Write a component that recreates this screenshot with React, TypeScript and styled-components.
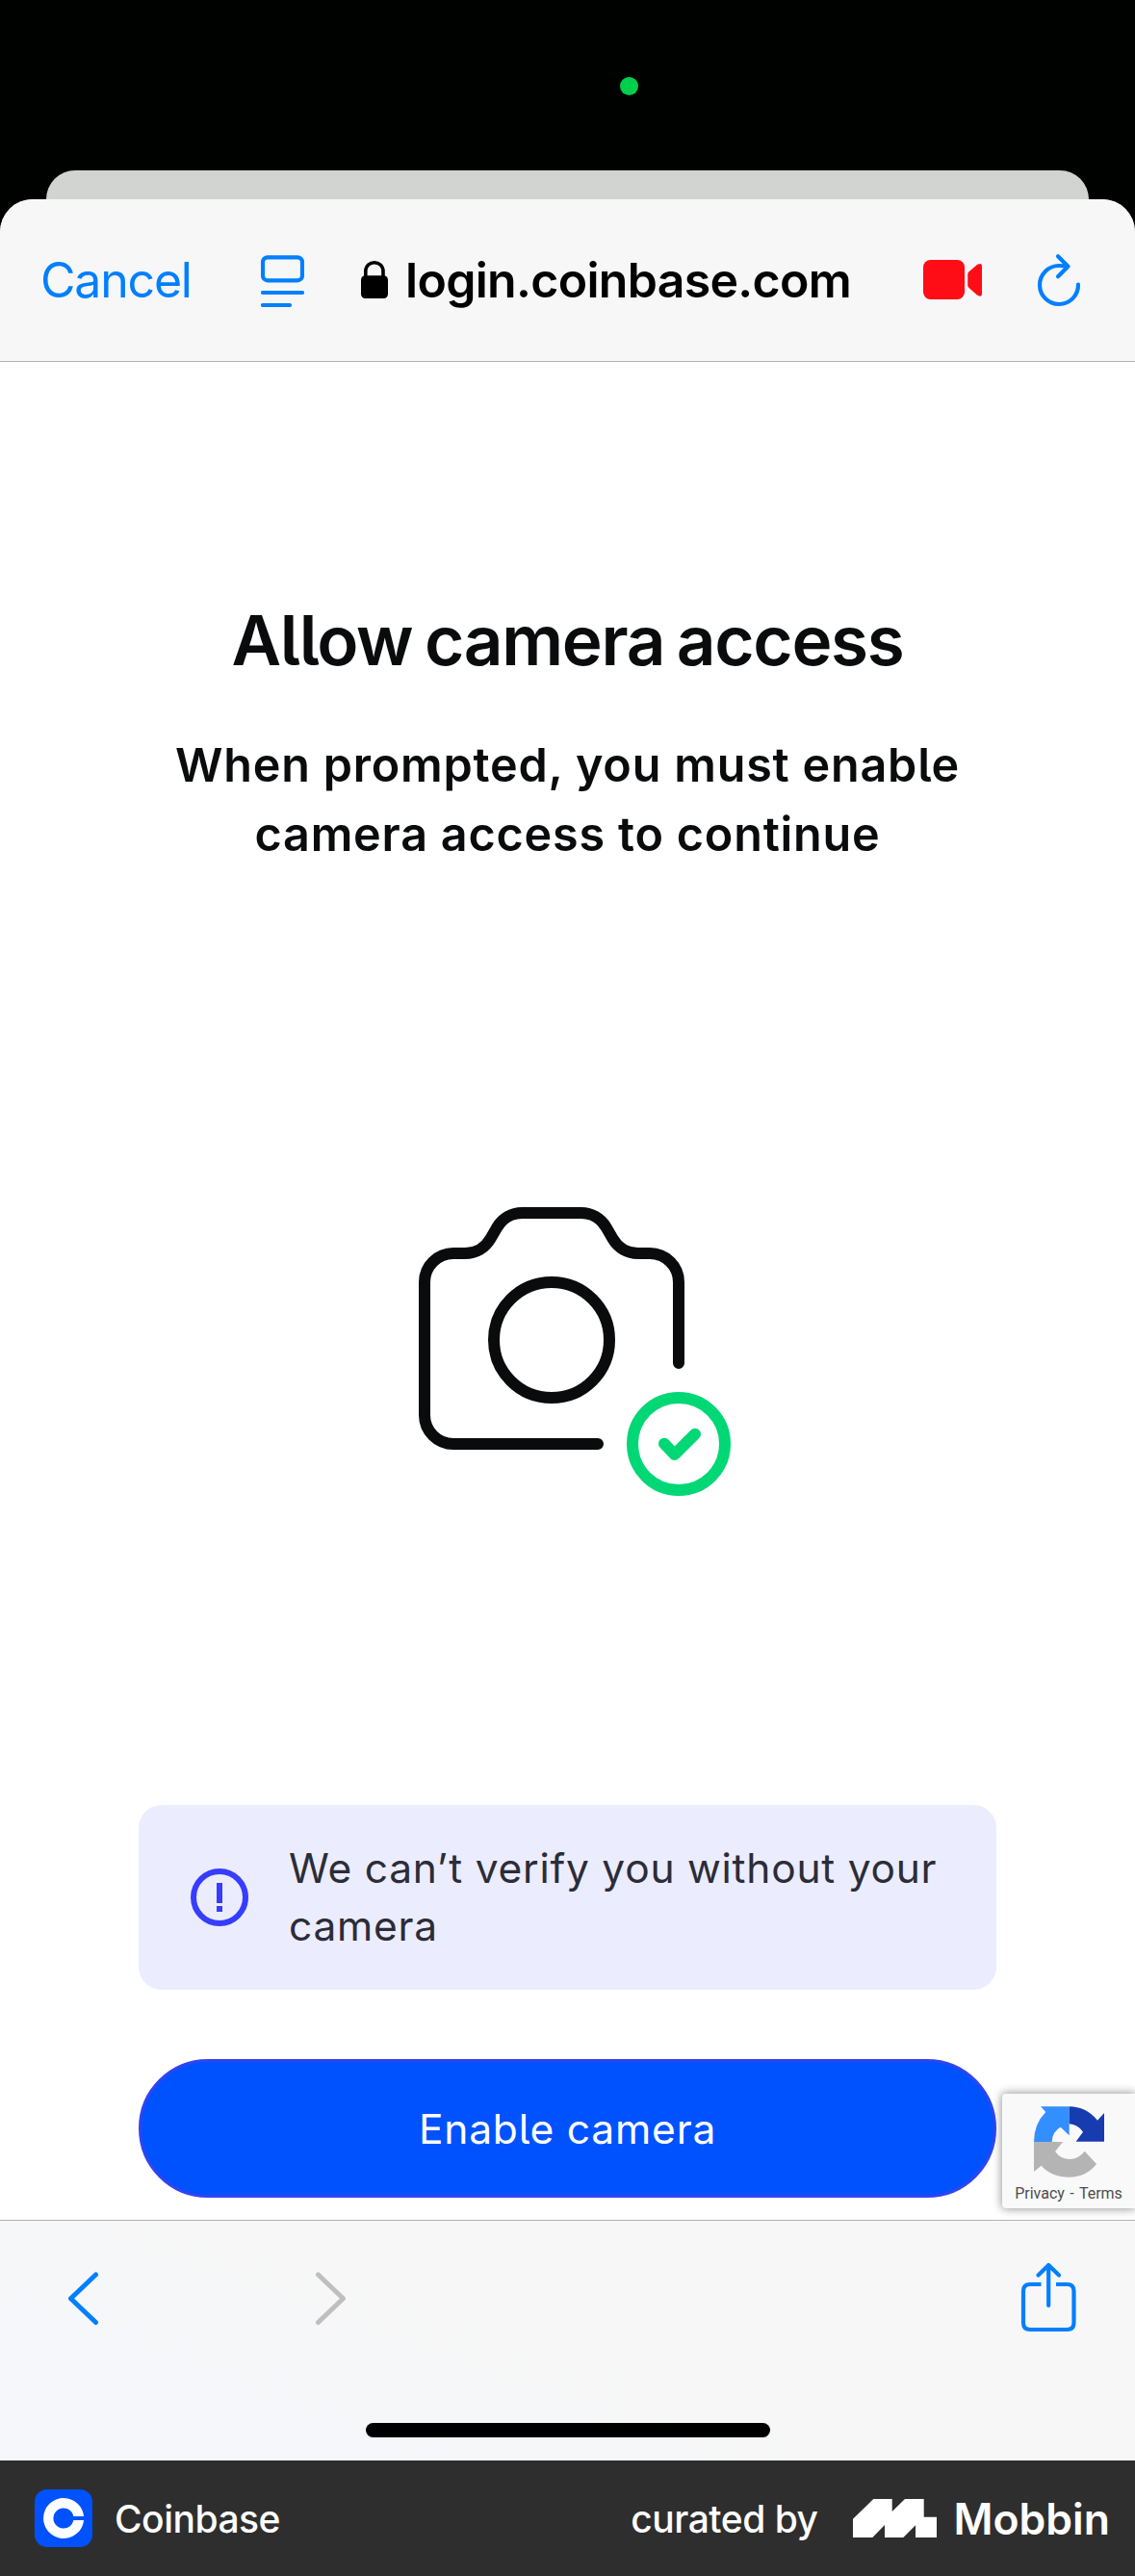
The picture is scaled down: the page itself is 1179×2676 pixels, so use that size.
import React from 'react';
import styled, { createGlobalStyle } from 'styled-components';

const Global = createGlobalStyle`
  * { box-sizing: border-box; }
  body { margin: 0; background: #000; font-family: Inter, "Liberation Sans", sans-serif; }
  h1, p { margin: 0; font-weight: inherit; }
  button { border: 0; padding: 0; background: none; font: inherit; color: inherit; }
  svg { display: block; flex: none; }
`;

const Screen = styled.div`
  width: 1179px;
  height: 2676px;
  display: flex;
  flex-direction: column;
  overflow: hidden;
  background: #000200;
`;

const StatusArea = styled.div`
  height: 177px;
  padding: 80px 0 0 644px;
  flex: none;
`;

const CameraDot = styled.div`
  width: 19px;
  height: 19px;
  border-radius: 50%;
  background: #00cf4b;
`;

const BackSheet = styled.div`
  height: 60px;
  margin: 0 48px -30px;
  flex: none;
  border-radius: 30px 30px 0 0;
  background: #d1d4d0;
`;

const Sheet = styled.div`
  flex: 1;
  display: flex;
  flex-direction: column;
  position: relative;
  border-radius: 34px 34px 0 0;
  background: #fff;
  overflow: hidden;
`;

const AddressBar = styled.header`
  height: 169px;
  flex: none;
  display: flex;
  padding: 53px 55px 0 42px;
  background: #f7f7f7;
  border-bottom: 1px solid #b2b2b2;
`;

const CancelButton = styled.button`
  width: 229px;
  height: 62px;
  line-height: 62px;
  text-align: left;
  font-size: 50px;
  letter-spacing: -1.2px;
  color: #007fff;
`;

const Address = styled.div`
  width: 584px;
  margin-left: 59px;
  height: 62px;
  display: flex;
  align-items: center;
  gap: 18px;
  font-size: 50px;
  font-weight: 600;
  letter-spacing: -0.7px;
  white-space: nowrap;
  color: #000;
`;

const BarIcon = styled.svg<{ $gap?: number }>`
  height: 62px;
  margin-left: ${p => p.$gap ?? 0}px;
`;

const Content = styled.main`
  flex: 1;
  display: flex;
  flex-direction: column;
  align-items: center;
  position: relative;
  font-feature-settings: "cv05";
`;

const Title = styled.h1`
  margin-top: 244px;
  height: 90px;
  line-height: 90px;
  font-size: 71px;
  font-weight: 600;
  letter-spacing: -1.3px;
  word-spacing: -4px;
  white-space: nowrap;
  color: #0a0b0d;
`;

const Subtitle = styled.p`
  margin-top: 49px;
  line-height: 72px;
  font-size: 48.5px;
  font-weight: 600;
  letter-spacing: 0.8px;
  text-align: center;
  white-space: nowrap;
  color: #0a0b0d;
`;

const Illustration = styled.svg`
  margin: 351px 0 0 15px;
`;

const Notice = styled.div`
  width: 891px;
  height: 192px;
  margin-top: 321px;
  padding: 36px 36px 36px 54px;
  display: flex;
  align-items: center;
  gap: 42px;
  border-radius: 24px;
  background: #ececff;
`;

const NoticeText = styled.p`
  line-height: 60px;
  font-size: 42.5px;
  letter-spacing: 0.76px;
  white-space: nowrap;
  color: #2b2d37;
`;

const PrimaryButton = styled.button`
  width: 891px;
  height: 144px;
  margin-top: 72px;
  border: 3px solid #2f45f0;
  border-radius: 72px;
  background: #0052ff;
  font-size: 42.5px;
  letter-spacing: 0.8px;
  color: #fff;
`;

const Recaptcha = styled.div`
  position: absolute;
  right: 0;
  bottom: 12px;
  width: 138px;
  height: 119px;
  padding-top: 13px;
  display: flex;
  flex-direction: column;
  align-items: center;
  gap: 5px;
  border-radius: 4px 0 0 4px;
  background: #f9f9f9;
  box-shadow: 0 0 10px 1px rgba(0, 0, 0, 0.4);
`;

const RecaptchaLinks = styled.div`
  font-family: Roboto, sans-serif;
  font-size: 16px;
  line-height: 24px;
  word-spacing: 1.5px;
  white-space: nowrap;
  color: #4d4d4d;
`;

const Toolbar = styled.footer`
  height: 250px;
  flex: none;
  display: flex;
  flex-direction: column;
  align-items: center;
  border-top: 1px solid #b2b2b2;
  background: linear-gradient(20deg, #f5f7fb 0%, #f6f7f9 30%, #f7f7f7 50%);
`;

const ToolbarRow = styled.div`
  width: 100%;
  height: 210px;
  padding: 43px 60px 0 70px;
  display: flex;
`;

const ForwardSlot = styled.div`
  margin: 0 auto 0 223px;
`;

const HomeIndicator = styled.div`
  width: 420px;
  height: 15px;
  flex: none;
  border-radius: 8px;
  background: #000;
`;

const Credit = styled.div`
  height: 120px;
  flex: none;
  display: flex;
  align-items: center;
  padding: 0 26px 0 36px;
  background: #2e2e2e;
  color: #fff;
  white-space: nowrap;
`;

const CreditText = styled.span<{ $left?: string; $size?: number; $weight?: number; $track?: number }>`
  margin-left: ${p => p.$left ?? '0'};
  padding-top: 2px;
  font-size: ${p => p.$size ?? 39}px;
  font-weight: ${p => p.$weight ?? 500};
  letter-spacing: ${p => p.$track ?? -0.5}px;
  line-height: 50px;
`;

const MobbinMark = styled.svg`
  margin: 0 17px 0 37px;
`;

const BLUE = '#007fff';

export default function App() {
  return (
    <>
      <Global />
      <Screen>
        <StatusArea>
          <CameraDot />
        </StatusArea>
        <BackSheet />
        <Sheet>
          <AddressBar>
            <CancelButton>Cancel</CancelButton>
            <BarIcon width="45" viewBox="271 260 45 62" fill="none" stroke={BLUE} strokeWidth="4.200" strokeLinecap="round">
              <rect x="273" y="267.300" width="41" height="24" rx="5" />
              <path d="M273 304H314M273 317H301" />
            </BarIcon>
            <Address>
              <svg width="28" height="62" viewBox="375.5 260 28 62">
                <path d="M380.300 288V282C380.300 269.600 398.500 269.600 398.500 282V288" fill="none" stroke="#000" strokeWidth="3.600" />
                <rect x="375.500" y="286.300" width="28" height="23.700" rx="4.500" />
              </svg>
              login.coinbase.com
            </Address>
            <BarIcon width="62" viewBox="959 260 62 62" fill="#ff0d17">
              <rect x="959" y="270" width="43" height="41" rx="7.500" />
              <path d="M1005.200 285Q1005.200 283.500 1006.500 282.300L1015 275Q1020 272 1020 277V304.500Q1020 309.500 1015 306.500L1006.500 299Q1005.200 297.800 1005.200 296.300Z" />
            </BarIcon>
            <BarIcon $gap={56} width="46" viewBox="1077 260 46 62" fill="none" stroke={BLUE} strokeWidth="4.200" strokeLinecap="round" strokeLinejoin="round">
              <path d="M1108 276.600Q1104 276 1100 276A20 20 0 1 0 1120 295.500M1099 266.300L1109.500 276.800L1099 287.300" />
            </BarIcon>
          </AddressBar>
          <Content>
            <Title>Allow camera access</Title>
            <Subtitle>
              When prompted, you must enable
              <br />
              camera access to continue
            </Subtitle>
            <Illustration width="324" height="300" viewBox="75 72 972 900" fill="none" strokeWidth="36" strokeLinecap="round" strokeLinejoin="round">
              <g stroke="#0a0b0d">
                <path d="M885 558V306A90 90 0 0 0 795 216H758A90 90 0 0 1 680 171L659 135A90 90 0 0 0 581 90H397A90 90 0 0 0 319 135L298 171A90 90 0 0 1 220 216H183A90 90 0 0 0 93 306V720A90 90 0 0 0 183 810H633" />
                <circle cx="489" cy="486" r="180" />
              </g>
              <g stroke="#00d775">
                <circle cx="885" cy="810" r="144" />
                <path d="M840 809L872 843L936 779" />
              </g>
            </Illustration>
            <Notice>
              <svg width="60" height="60" viewBox="0 0 60 60">
                <circle cx="30" cy="30" r="27" fill="none" stroke="#363dff" strokeWidth="6" />
                <path d="M27 15H33V36H27ZM27 39H33V45H27Z" fill="#363dff" />
              </svg>
              <NoticeText>
                We can’t verify you without your
                <br />
                camera
              </NoticeText>
            </Notice>
            <PrimaryButton>Enable camera</PrimaryButton>
            <Recaptcha>
              <svg width="73" height="74" viewBox="131 86 219 220">
                <path d="M152 86H241V176L214 150Q188 164 187 196H131Q131 140 168 103Z" fill="#338fff" />
                <path d="M241 86Q293 86 329 129L350 106V195H262L284 165Q268 142 241 140Z" fill="#173cb0" />
                <path d="M131 196H221L197 226Q214 250 243 250Q271 249 289 225L326 265Q294 306 241 306Q186 306 154 270L131 289Z" fill="#b4b4b4" />
              </svg>
              <RecaptchaLinks>Privacy - Terms</RecaptchaLinks>
            </Recaptcha>
          </Content>
          <Toolbar>
            <ToolbarRow>
              <svg width="34" height="75" viewBox="70 2350 34 75" fill="none" stroke={BLUE} strokeWidth="5" strokeLinecap="round" strokeLinejoin="round">
                <path d="M99.500 2363L73.500 2387.700L99.500 2412.500" />
              </svg>
              <ForwardSlot>
                <svg width="34" height="75" viewBox="327 2350 34 75" fill="none" stroke="#bfbfbf" strokeWidth="5" strokeLinecap="round" strokeLinejoin="round">
                  <path d="M330.500 2363L356.500 2387.700L330.500 2412.500" />
                </svg>
              </ForwardSlot>
              <svg width="59" height="75" viewBox="1060 2350 59 75" fill="none" stroke={BLUE} strokeWidth="4.200" strokeLinejoin="round">
                <path d="M1081.500 2373H1070Q1063 2373 1063 2380V2413Q1063 2420 1070 2420H1108.500Q1115.500 2420 1115.500 2413V2380Q1115.500 2373 1108.500 2373H1097" />
                <path d="M1089.200 2395V2353.500M1078.500 2363.500L1089.200 2353L1100 2363.500" strokeLinecap="round" />
              </svg>
            </ToolbarRow>
            <HomeIndicator />
          </Toolbar>
        </Sheet>
        <Credit>
          <svg width="60" height="60" viewBox="0 0 60 60">
            <rect width="60" height="60" rx="13" fill="#0052ff" />
            <path d="M51 32A21 21 0 1 1 51 28H40.400A10.600 10.600 0 1 0 40.400 32Z" fill="#fff" />
          </svg>
          <CreditText $left="23px">Coinbase</CreditText>
          <CreditText $left="auto">curated by</CreditText>
          <MobbinMark width="87" height="40" viewBox="0 0 87 40" fill="#fff">
            <path d="M0 20.700L21.300 0H40.700V13L54 0H73.700V18.700H87V40H65V27.300L52.300 40H33V27L20.300 40H0Z" />
          </MobbinMark>
          <CreditText $size={44.5} $weight={600} $track={0}>Mobbin</CreditText>
        </Credit>
      </Screen>
    </>
  );
}
